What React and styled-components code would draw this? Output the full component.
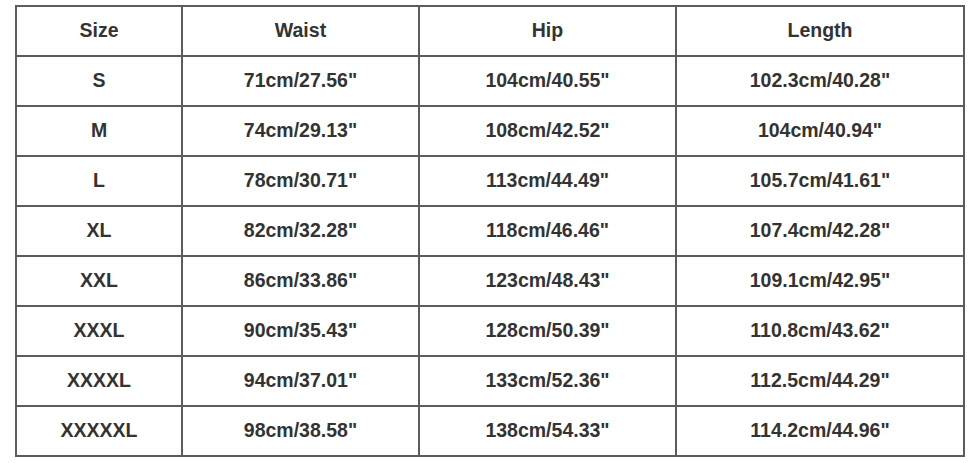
import React from "react";
import styled, { createGlobalStyle } from "styled-components";

const Global = createGlobalStyle`
  html, body { margin: 0; padding: 0; background: #fff; }
  body { font-family: "Liberation Sans", Arial, sans-serif; }
`;

const Page = styled.div`
  width: 980px;
  height: 463px;
  padding: 5px 0 0 15px;
  box-sizing: border-box;
  background: #fff;
`;

const Grid = styled.div`
  display: grid;
  grid-template-columns: 166px 237px 257px 288px;
  grid-auto-rows: 50px;
  width: max-content;
  border-top: 2px solid #5c5c5c;
  border-left: 2px solid #5c5c5c;
`;

const Cell = styled.div`
  display: flex;
  align-items: center;
  justify-content: center;
  border-right: 2px solid #5c5c5c;
  border-bottom: 2px solid #5c5c5c;
  font-size: 19.5px;
  font-weight: 700;
  color: #333;
  padding-bottom: 2px;
  box-sizing: border-box;
`;

const header = ["Size", "Waist", "Hip", "Length"];
const rows = [
  ["S", '71cm/27.56"', '104cm/40.55"', '102.3cm/40.28"'],
  ["M", '74cm/29.13"', '108cm/42.52"', '104cm/40.94"'],
  ["L", '78cm/30.71"', '113cm/44.49"', '105.7cm/41.61"'],
  ["XL", '82cm/32.28"', '118cm/46.46"', '107.4cm/42.28"'],
  ["XXL", '86cm/33.86"', '123cm/48.43"', '109.1cm/42.95"'],
  ["XXXL", '90cm/35.43"', '128cm/50.39"', '110.8cm/43.62"'],
  ["XXXXL", '94cm/37.01"', '133cm/52.36"', '112.5cm/44.29"'],
  ["XXXXXL", '98cm/38.58"', '138cm/54.33"', '114.2cm/44.96"'],
];

export default function App() {
  return (
    <>
      <Global />
      <Page>
        <Grid>
          {header.map((h) => (
            <Cell key={h}>{h}</Cell>
          ))}
          {rows.map((r) =>
            r.map((v, i) => <Cell key={r[0] + i}>{v}</Cell>)
          )}
        </Grid>
      </Page>
    </>
  );
}
